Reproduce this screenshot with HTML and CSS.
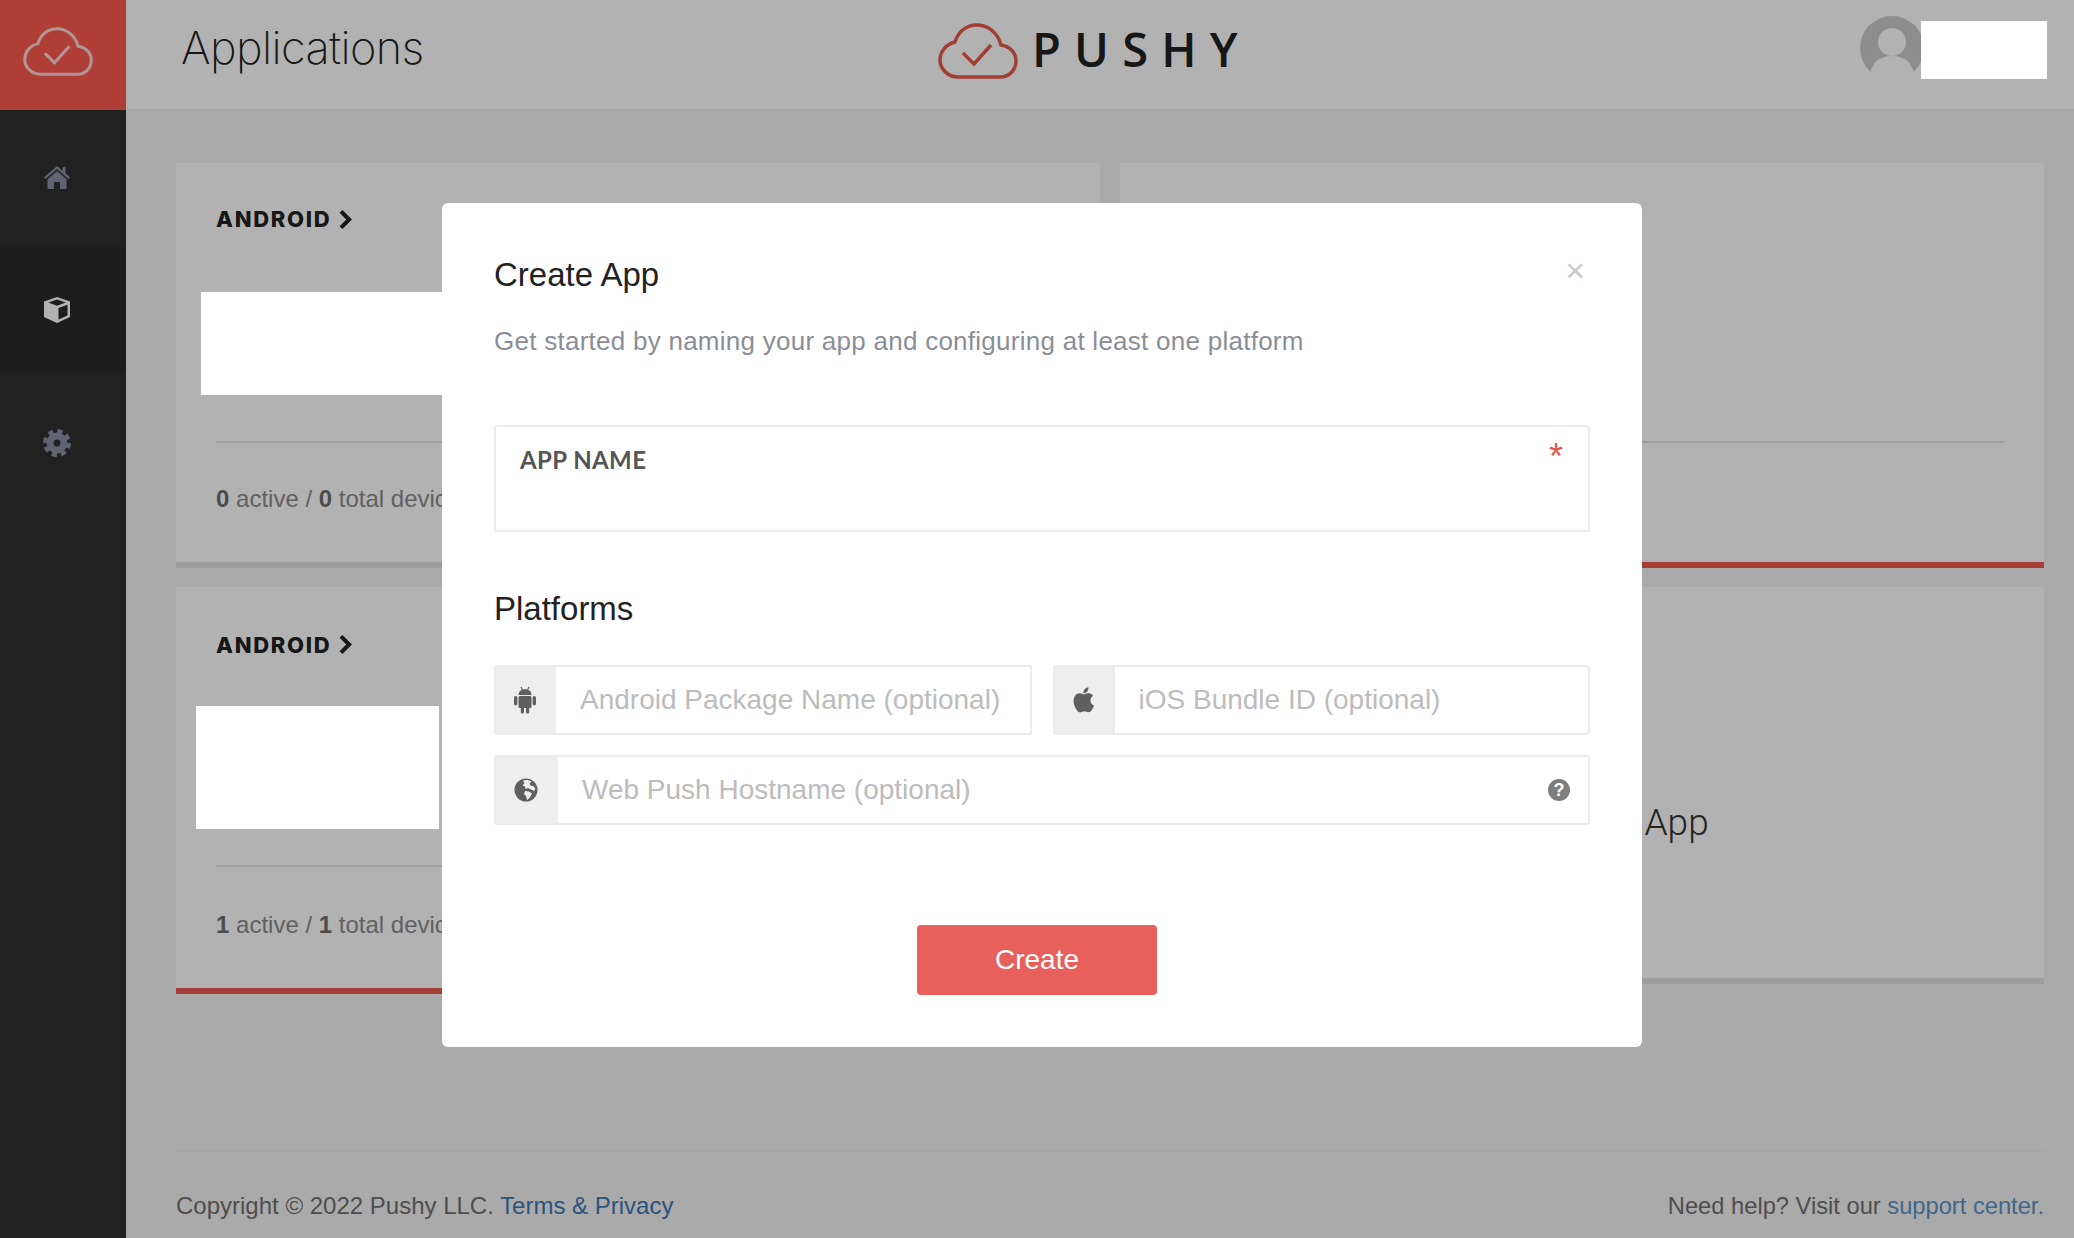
FILE: index.html
```html
<!DOCTYPE html>
<html lang="en">
<head>
    <meta charset="UTF-8">
    <title>Applications - Pushy</title>
    <link rel="stylesheet" href="styles.css">
</head>
<body>

    <div class="app">
        <!-- sidebar -->
        <nav class="sidebar">
            <a class="brand" href="#">
                <svg class="brand-icon" viewBox="0 0 80 56"><path d="M20 54H62C72 54 78 46 78 38C78 29 71 23 63 22C60 10 50 2 39 2C28 2 20 9 17 19C8 21 2 29 2 37C2 46 10 54 20 54Z M25 30L36 41L53 22"/></svg>
            </a>
            <div class="nav-items">
                <a class="nav-item" href="#">
                    <svg class="nav-icon" viewBox="0 0 28 26"><path d="M14 2L1 13.500L2.500 15L14 5L25.500 15L27 13.500L22.500 9.500V3H19.500V6.800Z"/><path d="M14 7L4.500 15.200V25H11V18H17V25H23.500V15.200Z"/></svg>
                </a>
                <a class="nav-item active" href="#">
                    <svg class="nav-icon" viewBox="0 0 28 28"><path d="M14 1L27 5.500V21L14 27L1 21V5.500Z"/><path class="cube-dark" d="M14 3.600L22.800 6.600L14 9.700L5.200 6.600Z"/><path class="cube-dark" d="M15.500 12L24.500 8.800V19.400L15.500 23.600Z"/></svg>
                </a>
                <a class="nav-item" href="#">
                    <svg class="nav-icon" viewBox="0 0 28 28"><circle class="gear-teeth" cx="14" cy="14" r="11.500"/><circle class="gear-ring" cx="14" cy="14" r="7"/></svg>
                </a>
            </div>
        </nav>

        <div class="main">
            <header class="topbar">
                <h1>Applications</h1>
                <div class="logo">
                    <svg class="logo-icon" viewBox="0 0 80 56"><path d="M20 54H62C72 54 78 46 78 38C78 29 71 23 63 22C60 10 50 2 39 2C28 2 20 9 17 19C8 21 2 29 2 37C2 46 10 54 20 54Z M25 30L36 41L53 22"/></svg>
                    <span>PUSHY</span>
                </div>
                <div class="account">
                    <svg class="avatar" viewBox="0 0 64 64"><circle class="avatar-bg" cx="32" cy="32" r="32"/><circle class="avatar-fg" cx="32" cy="26" r="14"/><path class="avatar-fg" d="M10 60C11 46 20 40 32 40C44 40 53 46 54 60L32 70Z"/></svg>
                    <div class="account-name"></div>
                </div>
            </header>

            <div class="content">
                <section class="card">
                    <h3>ANDROID <svg class="chevron" viewBox="0 0 12 18"><path d="M3 2L10 9L3 16"/></svg></h3>
                    <div class="redact redact-first"></div>
                    <div class="card-stats"><b>0</b> active / <b>0</b> total devices</div>
                </section>
                <section class="card card-live">
                    <h3>IOS <svg class="chevron" viewBox="0 0 12 18"><path d="M3 2L10 9L3 16"/></svg></h3>
                    <div class="card-stats"><b>1</b> active / <b>1</b> total devices</div>
                </section>
                <section class="card card-live card-tall">
                    <h3>ANDROID <svg class="chevron" viewBox="0 0 12 18"><path d="M3 2L10 9L3 16"/></svg></h3>
                    <div class="redact redact-second"></div>
                    <div class="card-stats"><b>1</b> active / <b>1</b> total devices</div>
                </section>
                <section class="card card-new">
                    <span>Create App</span>
                </section>
            </div>

            <footer class="footer">
                <div>Copyright © 2022 Pushy LLC. <a href="#">Terms &amp; Privacy</a></div>
                <div class="footer-help">Need help? Visit our <a href="#">support center.</a></div>
            </footer>
        </div>
    </div>

    <!-- create app modal -->
    <div class="overlay">
        <form class="modal">
            <button class="close" type="button">×</button>
            <h2>Create App</h2>
            <p class="subtitle">Get started by naming your app and configuring at least one platform</p>

            <label class="name-field">
                <span class="name-label">APP NAME</span>
                <span class="required">*</span>
                <input type="text">
            </label>

            <h2 class="platforms-title">Platforms</h2>

            <div class="platform-row">
                <div class="input-group">
                    <span class="addon">
                        <svg class="addon-icon" viewBox="0 0 24 28"><path d="M5.500 9C5.700 5.500 8 3.300 12 3.300C16 3.300 18.300 5.500 18.500 9Z"/><path d="M8 1L9.500 4M16 1L14.500 4" class="android-line"/><rect x="5.500" y="10" width="13" height="12" rx="1.500"/><rect x="1" y="10" width="3.400" height="9.500" rx="1.700"/><rect x="19.600" y="10" width="3.400" height="9.500" rx="1.700"/><rect x="7.800" y="20" width="3.200" height="7.500" rx="1.600"/><rect x="13" y="20" width="3.200" height="7.500" rx="1.600"/></svg>
                    </span>
                    <input type="text" placeholder="Android Package Name (optional)">
                </div>
                <div class="input-group">
                    <span class="addon">
                        <svg class="addon-icon" viewBox="0 0 22 26"><path d="M17 13.500C17 10.500 19.400 9.100 19.500 9C18.100 7 16 6.700 15.300 6.700C13.500 6.500 11.800 7.800 10.900 7.800C10 7.800 8.600 6.800 7.100 6.800C5.100 6.800 3.300 7.900 2.300 9.700C.3 13.300 1.800 18.600 3.800 21.500C4.800 22.900 5.900 24.500 7.500 24.500C9 24.400 9.500 23.500 11.300 23.500C13.100 23.500 13.600 24.400 15.100 24.400C16.700 24.400 17.700 23 18.700 21.500C19.800 19.900 20.300 18.300 20.300 18.200C20.300 18.200 17.200 17 17 13.500Z"/><path d="M14 5C14.800 4 15.400 2.600 15.200 1.200C14 1.200 12.600 2 11.700 3C10.900 3.900 10.300 5.300 10.500 6.700C11.800 6.800 13.200 6 14 5Z"/></svg>
                    </span>
                    <input type="text" placeholder="iOS Bundle ID (optional)">
                </div>
            </div>

            <div class="input-group input-group-wide">
                <span class="addon">
                    <svg class="addon-icon" viewBox="0 0 24 24"><circle cx="12" cy="12" r="11.500"/><path class="globe-land" d="M9 2.500C12 1.500 15.500 2 17.500 3.500L15.500 5.500L16.500 7.500L19 8L21.500 10.500L20 13L17 11.500L14 10L11.500 11L11 8.500L8.500 7.500L10.500 5ZM11 13L15 13.500L18 15.500L15.500 20L13 22L12 18L10 16Z"/></svg>
                </span>
                <input type="text" placeholder="Web Push Hostname (optional)">
                <span class="help-icon">?</span>
            </div>

            <div class="modal-actions">
                <button class="create-button" type="submit">Create</button>
            </div>
        </form>
    </div>

</body>
</html>
```
FILE: styles.css
```css
/* base */
* {
    box-sizing: border-box;
}

html, body {
    height: 100%;
}

body {
    margin: 0;
    overflow: hidden;
    font-family: 'Liberation Sans', Arial, sans-serif;
    background-color: #f4f4f4;
}

a {
    text-decoration: none;
}

.app {
    display: flex;
    height: 100vh;
}

/* sidebar */
.sidebar {
    width: 126px;
    flex-shrink: 0;
    background-color: #303030;
}

.brand {
    display: flex;
    align-items: center;
    justify-content: center;
    height: 110px;
    padding: 0 11px 8px 0;
    background-color: #fb5a50;
}

.brand-icon {
    width: 70px;
    height: 49px;
    fill: none;
    stroke: #fff;
    stroke-width: 3.500;
    opacity: 0.75;
}

.nav-items {
    display: flex;
    flex-direction: column;
    gap: 8px;
    padding-top: 4px;
}

.nav-item {
    display: flex;
    align-items: center;
    justify-content: center;
    height: 125px;
    padding-right: 12px;
    fill: #8a8fa3;
}

.nav-item.active {
    background-color: #2a2a2a;
    fill: #fff;
}

.nav-icon {
    width: 28px;
    height: 28px;
}

.cube-dark {
    fill: #2a2a2a;
}

.gear-teeth {
    fill: none;
    stroke: #8a8fa3;
    stroke-width: 5;
    stroke-dasharray: 5 4.030;
}

.gear-ring {
    fill: none;
    stroke: #8a8fa3;
    stroke-width: 7;
}

/* top bar */
.main {
    flex: 1;
    display: flex;
    flex-direction: column;
    min-width: 0;
}

.topbar {
    position: relative;
    display: flex;
    align-items: center;
    justify-content: space-between;
    height: 110px;
    padding: 0 27px 14px 55px;
    background-color: #fff;
    border-bottom: 1px solid #f0f0f0;
}

h1 {
    margin: 0;
    font-family: 'Inter', sans-serif;
    font-size: 45px;
    font-weight: 200;
    letter-spacing: -0.600px;
    color: #222;
}

.logo {
    position: absolute;
    left: 812px;
    top: 21px;
    display: flex;
    align-items: center;
    gap: 14px;
    font-family: 'Open Sans', sans-serif;
    font-size: 47px;
    font-weight: 600;
    line-height: 56px;
    letter-spacing: 13.200px;
    color: #222;
}

.logo span {
    padding-bottom: 4px;
}

.logo-icon {
    width: 80px;
    height: 56px;
    fill: none;
    stroke: #e8584e;
    stroke-width: 3.500;
}

.account {
    display: flex;
    align-items: flex-start;
    height: 64px;
}

.avatar {
    width: 64px;
    height: 64px;
}

.avatar-bg {
    fill: #cbcbcb;
}

.avatar-fg {
    fill: #fff;
}

.account-name {
    width: 126px;
    height: 58px;
    margin: 5px 0 0 -3px;
    background-color: #fff;
    position: relative;
    z-index: 3;
}

/* cards */
.content {
    display: grid;
    grid-template-columns: 924px 924px;
    grid-template-rows: 405px 406px;
    gap: 19px 20px;
    padding: 53px 30px 0 50px;
}

.card {
    position: relative;
    display: flex;
    flex-direction: column;
    padding: 0 40px;
    background-color: #fff;
    border-bottom: 6px solid #e2e2e2;
}

.card-live {
    border-bottom-color: #ea5950;
}

.card-tall {
    height: 407px;
}

.card h3 {
    display: flex;
    align-items: center;
    gap: 6px;
    height: 110px;
    margin: 0;
    padding-top: 2px;
    font-family: 'Inter', sans-serif;
    font-size: 22px;
    font-weight: 800;
    letter-spacing: 1.700px;
    color: #222;
}

.card-tall h3 {
    padding-top: 5px;
}

.chevron {
    width: 15px;
    height: 21px;
    fill: none;
    stroke: #222;
    stroke-width: 3.500;
}

.card-stats {
    margin-top: 168px;
    padding-top: 40px;
    border-top: 2px solid #e4e4e4;
    font-size: 24px;
    line-height: 32px;
    color: #8c8c8c;
}

.card-tall .card-stats {
    padding-top: 42px;
}

.card-stats b {
    color: #6e6e6e;
}

/* masked out parts of the screenshot */
.redact {
    position: absolute;
    background-color: #fff;
    z-index: 3;
}

.redact-first {
    left: 25px;
    top: 129px;
    width: 241px;
    height: 103px;
}

.redact-second {
    left: 20px;
    top: 119px;
    width: 243px;
    height: 123px;
}

.card-new {
    height: 397px;
    align-items: center;
    justify-content: center;
    padding-top: 80px;
    padding-left: 114px;
    font-family: 'Roboto', sans-serif;
    font-size: 37px;
    font-weight: 300;
    color: #333;
}

/* footer */
.footer {
    display: flex;
    justify-content: space-between;
    margin: auto 30px 0 50px;
    height: 88px;
    padding-top: 39px;
    border-top: 2px solid #eee;
    font-size: 24px;
    line-height: 30px;
    color: #707070;
}

.footer a {
    color: #3c78b4;
}

.footer-help {
    font-size: 23.700px;
}

.footer-help a {
    color: #5b93c9;
}

/* modal */
.overlay {
    position: fixed;
    inset: 0;
    z-index: 2;
    display: flex;
    justify-content: center;
    align-items: flex-start;
    padding: 203px 0 0 10px;
    background-color: rgba(0, 0, 0, 0.3);
}

.modal {
    position: relative;
    z-index: 2;
    width: 1200px;
    height: 844px;
    padding: 53px 52px 0;
    background-color: #fff;
    border-radius: 6px;
}

.close {
    position: absolute;
    right: 57px;
    top: 47px;
    padding: 0;
    border: none;
    background: none;
    font-family: 'Liberation Sans', sans-serif;
    font-size: 34px;
    line-height: 40px;
    color: #c9c9c9;
}

.modal h2 {
    margin: 0;
    font-size: 33px;
    font-weight: 400;
    line-height: 38px;
    color: #222;
}

.subtitle {
    margin: 30px 0 0;
    font-size: 26px;
    line-height: 34px;
    letter-spacing: 0.260px;
    color: #8b8e97;
}

.name-field {
    position: relative;
    display: block;
    height: 107px;
    margin-top: 67px;
    padding: 18px 24px 0;
    border: 2px solid #ececec;
    border-radius: 3px;
}

.name-label {
    display: block;
    font-family: 'Lato', sans-serif;
    font-size: 24px;
    font-weight: 700;
    line-height: 30px;
    letter-spacing: 0.400px;
    color: #555;
}

.required {
    position: absolute;
    right: 25px;
    top: 10px;
    font-size: 36px;
    line-height: 40px;
    color: #e8544e;
}

.name-field input {
    width: 100%;
    height: 40px;
    border: none;
    outline: none;
    font-size: 24px;
}

.platforms-title {
    margin-top: 58px !important;
}

.platform-row {
    display: flex;
    gap: 21px;
    margin-top: 37px;
}

.input-group {
    flex: 1;
    display: flex;
    align-items: center;
    height: 70px;
    border: 2px solid #ececec;
    border-radius: 3px;
}

.input-group-wide {
    margin-top: 20px;
    padding-right: 18px;
}

.addon {
    display: flex;
    align-items: center;
    justify-content: center;
    align-self: stretch;
    width: 60px;
    padding-right: 2px;
    flex-shrink: 0;
    background-color: #eee;
}

.input-group-wide .addon {
    width: 62px;
}

.addon-icon {
    width: 24px;
    height: 28px;
    fill: #5f5f5f;
}

.android-line {
    fill: none;
    stroke: #5f5f5f;
    stroke-width: 1.200;
}

.globe-land {
    fill: #eee;
}

.input-group input {
    flex: 1;
    min-width: 0;
    height: 100%;
    padding: 0 0 0 24px;
    border: none;
    outline: none;
    background: none;
    font-family: 'Liberation Sans', Arial, sans-serif;
    font-size: 28px;
}

.input-group input::placeholder {
    color: #bcbcbc;
    opacity: 1;
}

.help-icon {
    width: 22px;
    height: 22px;
    flex-shrink: 0;
    border-radius: 50%;
    background-color: #7d7d7d;
    font-size: 18px;
    font-weight: 700;
    line-height: 22px;
    text-align: center;
    color: #fff;
}

.modal-actions {
    display: flex;
    justify-content: center;
    margin-top: 100px;
    padding-right: 10px;
}

.create-button {
    width: 240px;
    height: 70px;
    border: none;
    border-radius: 4px;
    background-color: #e8605c;
    font-family: 'Liberation Sans', Arial, sans-serif;
    font-size: 28px;
    color: #fff;
}
```
